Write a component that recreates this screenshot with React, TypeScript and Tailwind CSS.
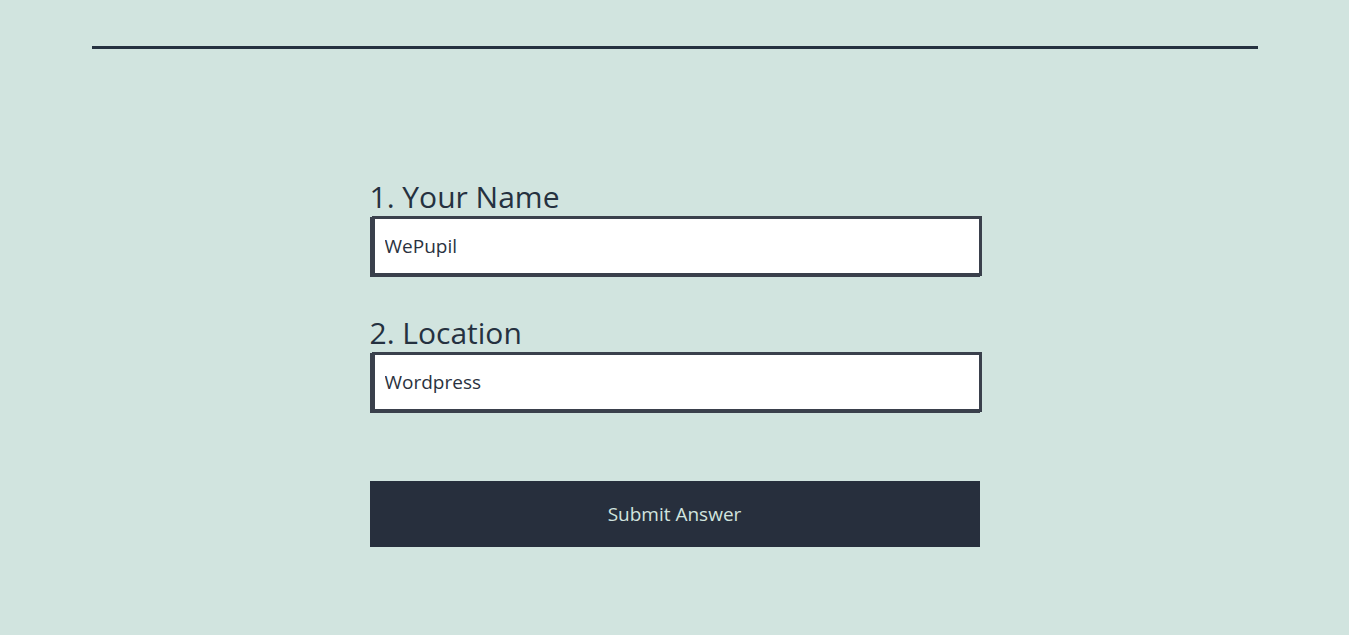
export default function App() {
  return (
    <div className="min-h-[635px] bg-[#d1e4df] font-['Open_Sans',sans-serif] text-[#253140]">
      <div className="mx-auto w-[1166px] pt-[46px]">
        <div className="h-[3px] bg-[#253140]" />
      </div>

      <form className="mx-auto mt-[130px] w-[610px]" onSubmit={(e) => e.preventDefault()}>
        <label className="block">
          <span className="block text-[30px] leading-[36px]">1. Your Name</span>
          <input
            defaultValue="WePupil"
            className="mt-[1px] ml-[2px] h-[60px] w-[610px] border-[3px] border-[#3a404c] bg-white px-[10px] text-[19px] text-[#2a3240] shadow-[-2px_1px_0_#3a404c] outline-none"
          />
        </label>

        <label className="mt-[39px] block">
          <span className="block text-[30px] leading-[36px]">2. Location</span>
          <input
            defaultValue="Wordpress"
            className="mt-[1px] ml-[2px] h-[60px] w-[610px] border-[3px] border-[#3a404c] bg-white px-[10px] text-[19px] text-[#2a3240] shadow-[-2px_1px_0_#3a404c] outline-none"
          />
        </label>

        <button
          type="submit"
          className="mt-[69px] h-[66px] w-[610px] bg-[#272f3d] text-[19px] text-[#d1e4df]"
        >
          Submit Answer
        </button>
      </form>
    </div>
  );
}
